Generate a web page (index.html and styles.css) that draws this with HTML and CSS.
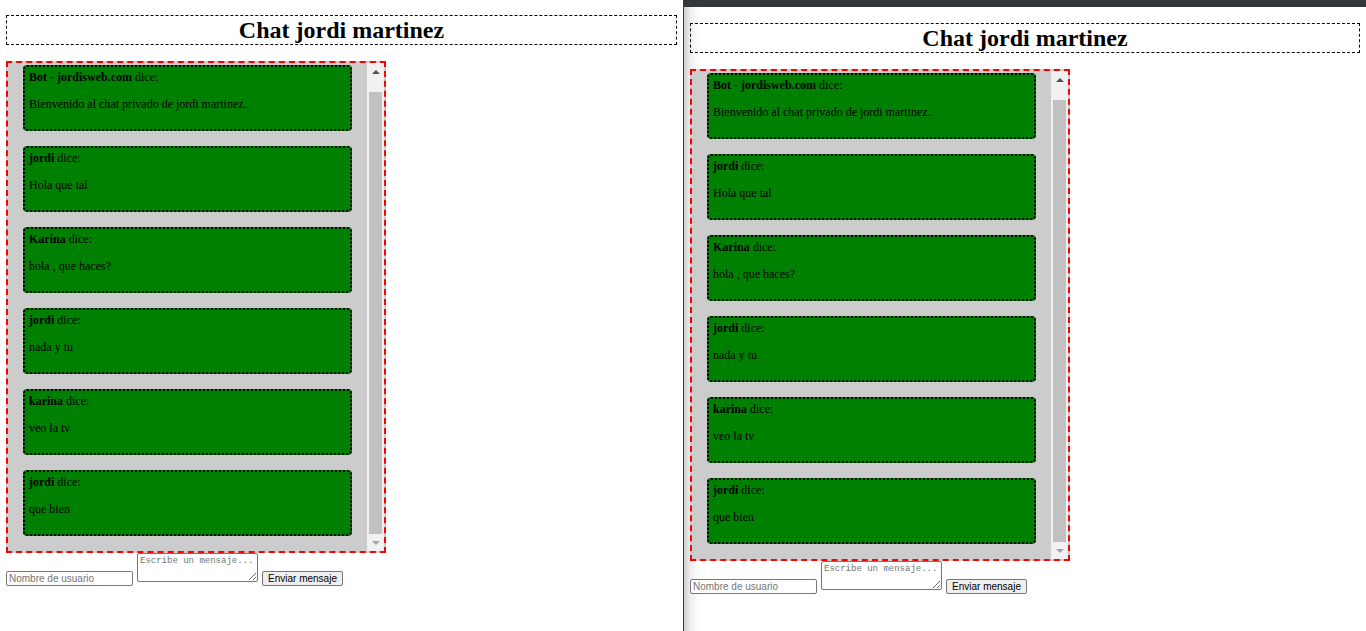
FILE: index.html
```html
<!DOCTYPE html>
<html lang="es">
<head>
<meta charset="utf-8">
<title>Chat jordi martinez</title>
<link rel="stylesheet" href="styles.css">
</head>
<body>
<div class="desktop">
  <section class="pane pane-left">
    <h1 class="title">Chat jordi martinez</h1>
    <div class="chat">
      <div class="chat-scroll">
        <div class="msg"><div class="meta"><b>Bot - jordisweb.com</b> dice:</div><p class="text">Bienvenido al chat privado de jordi martinez..</p></div>
        <div class="msg"><div class="meta"><b>jordi</b> dice:</div><p class="text">Hola que tal</p></div>
        <div class="msg"><div class="meta"><b>Karina</b> dice:</div><p class="text">hola , que haces?</p></div>
        <div class="msg"><div class="meta"><b>jordi</b> dice:</div><p class="text">nada y tu</p></div>
        <div class="msg"><div class="meta"><b>karina</b> dice:</div><p class="text">veo la tv</p></div>
        <div class="msg"><div class="meta"><b>jordi</b> dice:</div><p class="text">que bien</p></div>
      </div>
      <div class="scrollbar">
        <div class="sb-btn"><span class="arrow-up"></span></div>
        <div class="sb-track"><div class="sb-thumb"></div></div>
        <div class="sb-btn"><span class="arrow-down"></span></div>
      </div>
    </div>
    <form class="send">
      <input class="user" type="text" placeholder="Nombre de usuario">
      <textarea class="message" placeholder="Escribe un mensaje..."></textarea>
      <button class="btn" type="button">Enviar mensaje</button>
    </form>
  </section>
  <div class="divider"></div>
  <section class="pane pane-right">
    <div class="topbar"></div>
    <div class="pane-body">
      <h1 class="title">Chat jordi martinez</h1>
      <div class="chat">
        <div class="chat-scroll">
          <div class="msg"><div class="meta"><b>Bot - jordisweb.com</b> dice:</div><p class="text">Bienvenido al chat privado de jordi martinez..</p></div>
          <div class="msg"><div class="meta"><b>jordi</b> dice:</div><p class="text">Hola que tal</p></div>
          <div class="msg"><div class="meta"><b>Karina</b> dice:</div><p class="text">hola , que haces?</p></div>
          <div class="msg"><div class="meta"><b>jordi</b> dice:</div><p class="text">nada y tu</p></div>
          <div class="msg"><div class="meta"><b>karina</b> dice:</div><p class="text">veo la tv</p></div>
          <div class="msg"><div class="meta"><b>jordi</b> dice:</div><p class="text">que bien</p></div>
        </div>
        <div class="scrollbar">
          <div class="sb-btn"><span class="arrow-up"></span></div>
          <div class="sb-track"><div class="sb-thumb"></div></div>
          <div class="sb-btn"><span class="arrow-down"></span></div>
        </div>
      </div>
      <form class="send">
        <input class="user" type="text" placeholder="Nombre de usuario">
        <textarea class="message" placeholder="Escribe un mensaje..."></textarea>
        <button class="btn" type="button">Enviar mensaje</button>
      </form>
    </div>
  </section>
</div>
<script src="script.js"></script>
</body>
</html>
```

FILE: styles.css
```css
html, body {
  margin: 0;
  padding: 0;
  height: 631px;
  overflow: hidden;
  background: #fff;
}

body {
  font-family: "Liberation Serif", "Times New Roman", serif;
  font-size: 16px;
  color: #000;
}

.desktop {
  display: flex;
  height: 631px;
}

.pane-left {
  width: 683px;
  flex: none;
  box-sizing: border-box;
  padding: 15px 6px 0 6px;
  background: #fff;
}

.divider {
  width: 1px;
  flex: none;
  background: #3a3a3c;
}

.pane-right {
  flex: 1;
  display: flex;
  flex-direction: column;
  background: linear-gradient(to right, #cfcfcf 0, #ececec 6px, #fbfbfb 13px, #fff 17px);
}

.topbar {
  height: 7px;
  flex: none;
  background: #35363a;
}

.pane-body {
  padding: 16px 6px 0 6px;
}

.title {
  margin: 0 0 16px 0;
  border: 1px dashed #000;
  font-size: 24px;
  line-height: 28px;
  font-weight: bold;
  text-align: center;
}

.chat {
  box-sizing: border-box;
  width: 380px;
  height: 492px;
  border: 2px dashed #ff0000;
  background: #cccccc;
  display: flex;
}

.chat-scroll {
  flex: 1;
  min-width: 0;
  overflow: hidden;
  display: flex;
  flex-direction: column;
  gap: 15px;
  padding: 15px 15px 15px 15px;
}

.scrollbar {
  width: 17px;
  flex: none;
  display: flex;
  flex-direction: column;
  background: #f1f1f1;
}

.sb-btn {
  height: 17px;
  flex: none;
  display: flex;
  align-items: center;
  justify-content: center;
}

.arrow-up {
  width: 0;
  height: 0;
  border-left: 4px solid transparent;
  border-right: 4px solid transparent;
  border-bottom: 4px solid #505050;
}

.arrow-down {
  width: 0;
  height: 0;
  border-left: 4px solid transparent;
  border-right: 4px solid transparent;
  border-top: 4px solid #a3a3a3;
}

.sb-track {
  flex: 1;
  padding: 12px 2px 0 2px;
}

.sb-thumb {
  height: 442px;
  background: #c1c1c1;
}

.msg {
  flex: none;
  box-sizing: border-box;
  height: 66px;
  border: 2px dotted #000;
  border-radius: 4px;
  background: #008000;
  padding: 3px 4px 4px 4px;
  font-size: 12px;
  line-height: 14px;
}

.meta {
  line-height: 14px;
}

.text {
  margin: 13px 0 14px 0;
  line-height: 14px;
}

.send {
  display: flex;
  align-items: flex-start;
  gap: 4px;
  margin: 0;
}

.user {
  box-sizing: border-box;
  width: 127px;
  height: 15px;
  margin: 18px 0 0 0;
  padding: 1px 2px;
  border: 1px solid #767676;
  border-radius: 2px;
  font-family: "Liberation Sans", Arial, sans-serif;
  font-size: 10px;
  line-height: 11px;
  background: #fff;
  color: #000;
}

.user::placeholder {
  color: #757575;
}

.message {
  box-sizing: border-box;
  width: 121px;
  height: 29px;
  margin: 0;
  padding: 2px;
  border: 1px solid #767676;
  border-radius: 2px;
  font-family: "Liberation Mono", "Courier New", monospace;
  font-size: 9px;
  line-height: 11px;
  background: #fff;
  color: #000;
  white-space: pre;
  overflow: hidden;
}

.message::placeholder {
  color: #757575;
}

.btn {
  box-sizing: border-box;
  width: 81px;
  height: 15px;
  margin: 18px 0 0 0;
  padding: 0;
  border: 1px solid #767676;
  border-radius: 2px;
  background: #efefef;
  color: #000;
  font-family: "Liberation Sans", Arial, sans-serif;
  font-size: 10px;
  line-height: 12px;
  white-space: nowrap;
  text-align: center;
}
```

FILE: script.js
```js
document.querySelectorAll('.chat-scroll').forEach(function (c) {
  c.scrollTop = c.scrollHeight;
});
```
